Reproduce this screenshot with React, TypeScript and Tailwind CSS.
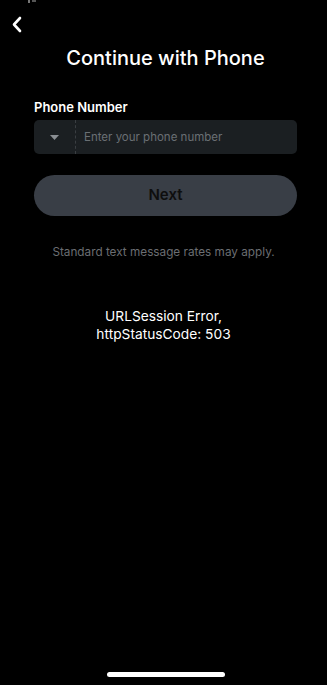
import React from "react";

export default function App() {
  return (
    <div
      className="relative w-[327px] h-[685px] bg-black text-white overflow-hidden"
      style={{ fontFamily: "Inter, 'Open Sans', sans-serif" }}
    >
      <div className="absolute left-[28px] top-0 flex gap-[2px]">
        <div className="w-[2px] h-[3px] bg-[#777]" />
        <div className="w-[4px] h-[2px] bg-[#555]" />
      </div>
      <div className="pt-[16px] pl-[11px] h-[42px]">
        <svg width="12" height="17" viewBox="0 0 12 17" fill="none">
          <path d="M9 2 L3 8.5 L9 15" stroke="white" strokeWidth="2.6" strokeLinecap="round" strokeLinejoin="round" />
        </svg>
      </div>
      <h1 className="text-center text-[20px] font-medium leading-[30px] mt-[1px] pl-[4px]">
        Continue with Phone
      </h1>
      <div className="pl-[34px] pr-[30px] mt-[24px]">
        <div className="text-[13px] font-semibold leading-[18px] pt-[1px]">Phone Number</div>
        <div className="mt-[4px] h-[34px] rounded-[5px] bg-[#1b1f22] flex items-center">
          <div className="w-[42px] h-full flex items-center justify-center border-r border-dashed border-[#3a3e42]">
            <svg width="9" height="5" viewBox="0 0 9 5">
              <path d="M0 0 H9 L4.5 5 Z" fill="#8a8e93" />
            </svg>
          </div>
          <span className="pl-[8px] pt-[2px] text-[11.5px] text-[#6a6f74]">Enter your phone number</span>
        </div>
        <div className="mt-[21px] h-[41px] rounded-full bg-[#393e46] flex items-center justify-center text-[15px] font-semibold text-[#0e0e0e]">
          Next
        </div>
      </div>
      <p className="mt-[28px] text-center text-[11.75px] text-[#6b6e72]">
        Standard text message rates may apply.
      </p>
      <p className="mt-[45px] text-center text-[13.75px] leading-[18px]">
        URLSession Error,
        <br />
        httpStatusCode: 503
      </p>
      <div className="absolute left-[107px] top-[672px] w-[118px] h-[5px] rounded-full bg-white" />
    </div>
  );
}
